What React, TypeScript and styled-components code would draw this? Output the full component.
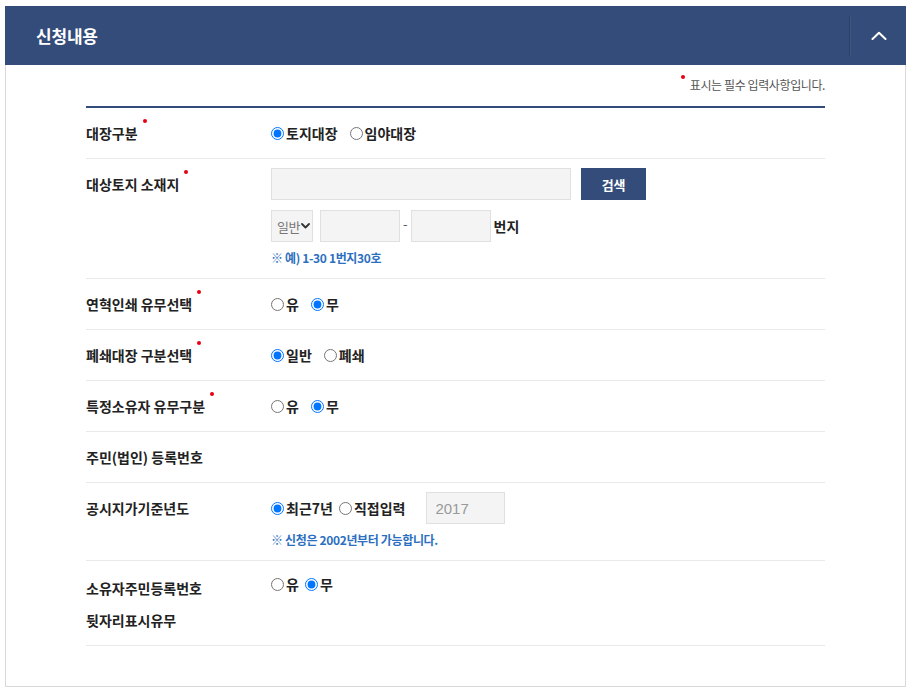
import React from "react";
import styled, { createGlobalStyle } from "styled-components";

const GlobalStyle = createGlobalStyle`
  html, body { margin: 0; padding: 0; background: #ffffff; }
  body { font-family: "Noto Sans CJK KR", "Noto Sans", sans-serif; color: #222; }
  * { box-sizing: border-box; }
`;

const NAVY = "#344c79";

const Page = styled.div`
  padding: 6px 7px 0 5px;
  width: 913px;
`;

const Panel = styled.section`
  width: 901px;
`;

const Header = styled.header`
  height: 59px;
  background: ${NAVY};
  display: flex;
  align-items: center;
  justify-content: space-between;
`;

const Title = styled.h2`
  margin: 0 0 0 31px;
  font-size: 17px;
  font-weight: 700;
  letter-spacing: -0.2px;
  color: #ffffff;
  line-height: 24px;
`;

const Toggle = styled.button`
  width: 57px;
  height: 40px;
  border: 0;
  border-left: 1px solid #2c416a;
  box-shadow: inset 1px 0 0 #3d5683;
  background: transparent;
  display: flex;
  align-items: center;
  justify-content: center;
  padding: 0 0 0 2px;
  cursor: pointer;
`;

const Body = styled.div`
  border: 1px solid #d9d9d9;
  border-top: 0;
  padding: 0 80px 40px 80px;
`;

const Note = styled.p`
  margin: 0;
  height: 43px;
  display: flex;
  align-items: center;
  justify-content: flex-end;
  font-size: 12px;
  letter-spacing: -0.4px;
  color: #555;
  border-bottom: 2px solid ${NAVY};
  padding-bottom: 3px;
`;

const NoteText = styled.span`
  position: relative;
  &::before {
    content: "";
    position: absolute;
    left: -9px;
    top: -1px;
    width: 4px;
    height: 4px;
    border-radius: 50%;
    background: #e60012;
  }
`;

const Row = styled.div<{ $tall?: boolean }>`
  display: grid;
  grid-template-columns: 185px 1fr;
  border-bottom: 1px solid #e9e9e9;
  padding: ${(p) => (p.$tall ? "11px 0 9px" : "9px 0")};
`;

const Label = styled.div`
  font-size: 14px;
  font-weight: 700;
  letter-spacing: 0;
  line-height: 32px;
  color: #222;
`;

const LabelText = styled.span<{ $required?: boolean }>`
  position: relative;
  &::after {
    content: "";
    display: ${(p) => (p.$required ? "block" : "none")};
    position: absolute;
    right: -9px;
    top: -4px;
    width: 4px;
    height: 4px;
    border-radius: 50%;
    background: #e60012;
  }
`;

const Value = styled.div`
  display: flex;
  flex-direction: column;
  gap: 10px;
`;

const Line = styled.div<{ $gap?: number; $lift?: number }>`
  display: flex;
  align-items: center;
  min-height: 32px;
  gap: ${(p) => p.$gap ?? 12}px;
  margin-top: ${(p) => -(p.$lift ?? 0)}px;
`;

const Radio = styled.label`
  display: inline-flex;
  align-items: center;
  font-size: 14px;
  font-weight: 700;
  letter-spacing: 0;
  color: #222;
  line-height: 20px;
  input {
    width: 13px;
    height: 13px;
    margin: 0 2px 0 0;
  }
`;

const TextInput = styled.input<{ $w: number; $offset?: number }>`
  width: ${(p) => p.$w}px;
  height: 32px;
  margin-left: ${(p) => p.$offset ?? 0}px;
  border: 1px solid #e0e0e0;
  background: #f4f4f4;
  padding: 0 8px;
  font-family: "Liberation Sans", Arial, sans-serif;
  font-size: 15px;
  color: #999;
  outline: none;
`;

const SearchButton = styled.button`
  width: 65px;
  height: 32px;
  margin-left: -2px;
  border: 0;
  background: ${NAVY};
  color: #fff;
  font-family: "Noto Sans CJK KR", sans-serif;
  font-size: 13px;
  font-weight: 700;
  letter-spacing: -0.3px;
  cursor: pointer;
`;

const SelectWrap = styled.div`
  position: relative;
  width: 42px;
  height: 32px;
  svg {
    position: absolute;
    right: 3px;
    top: 13px;
    pointer-events: none;
  }
`;

const Select = styled.select`
  appearance: none;
  width: 42px;
  height: 32px;
  border: 1px solid #e0e0e0;
  background: #f4f4f4;
  padding: 0 0 0 5px;
  font-family: "Noto Sans CJK KR", sans-serif;
  font-size: 13px;
  color: #777;
  letter-spacing: -0.5px;
  outline: none;
`;

const Dash = styled.span`
  font-size: 13px;
  color: #555;
  margin: -6px -4px 0;
`;

const Unit = styled.span`
  font-size: 14px;
  font-weight: 700;
  letter-spacing: 0;
  color: #222;
  margin-left: -4px;
`;

const Hint = styled.p`
  margin: -6px 0 0;
  font-size: 12px;
  font-weight: 700;
  letter-spacing: -0.35px;
  line-height: 23px;
  color: #2c6fbf;
`;

const Chevron = () => (
  <svg width="16" height="9" viewBox="0 0 16 9" fill="none">
    <path d="M1.5 8 L8 1.8 L14.5 8" stroke="#ffffff" strokeWidth="2" strokeLinecap="round" strokeLinejoin="round" />
  </svg>
);

const SmallChevron = () => (
  <svg width="9" height="6" viewBox="0 0 9 6" fill="none">
    <path d="M1 1 L4.5 4.5 L8 1" stroke="#333" strokeWidth="1.8" strokeLinecap="round" strokeLinejoin="round" />
  </svg>
);

type Opt = { label: string; checked?: boolean };

const RadioGroup = ({
  name,
  options,
  gap,
  lift,
}: {
  name: string;
  options: Opt[];
  gap?: number;
  lift?: number;
}) => (
  <Line $gap={gap} $lift={lift}>
    {options.map((o) => (
      <Radio key={o.label}>
        <input type="radio" name={name} defaultChecked={o.checked} />
        {o.label}
      </Radio>
    ))}
  </Line>
);

export default function App() {
  return (
    <>
      <GlobalStyle />
      <Page>
        <Panel>
          <Header>
            <Title>신청내용</Title>
            <Toggle aria-label="접기">
              <Chevron />
            </Toggle>
          </Header>
          <Body>
            <Note>
              <NoteText>표시는 필수 입력사항입니다.</NoteText>
            </Note>

            <Row>
              <Label><LabelText $required>대장구분</LabelText></Label>
              <Value>
                <RadioGroup name="ledger" options={[{ label: "토지대장", checked: true }, { label: "임야대장" }]} />
              </Value>
            </Row>

            <Row>
              <Label><LabelText $required>대상토지 소재지</LabelText></Label>
              <Value>
                <Line>
                  <TextInput $w={300} />
                  <SearchButton>검색</SearchButton>
                </Line>
                <Line $gap={7}>
                  <SelectWrap>
                    <Select defaultValue="일반">
                      <option>일반</option>
                      <option>산</option>
                    </Select>
                    <SmallChevron />
                  </SelectWrap>
                  <TextInput $w={80} />
                  <Dash>-</Dash>
                  <TextInput $w={80} />
                  <Unit>번지</Unit>
                </Line>
                <Hint>※ 예) 1-30 1번지30호</Hint>
              </Value>
            </Row>

            <Row>
              <Label><LabelText $required>연혁인쇄 유무선택</LabelText></Label>
              <Value>
                <RadioGroup name="history" options={[{ label: "유" }, { label: "무", checked: true }]} />
              </Value>
            </Row>

            <Row>
              <Label><LabelText $required>폐쇄대장 구분선택</LabelText></Label>
              <Value>
                <RadioGroup name="closed" options={[{ label: "일반", checked: true }, { label: "폐쇄" }]} />
              </Value>
            </Row>

            <Row>
              <Label><LabelText $required>특정소유자 유무구분</LabelText></Label>
              <Value>
                <RadioGroup name="owner" options={[{ label: "유" }, { label: "무", checked: true }]} />
              </Value>
            </Row>

            <Row>
              <Label><LabelText>주민(법인) 등록번호</LabelText></Label>
              <Value />
            </Row>

            <Row>
              <Label><LabelText>공시지가기준년도</LabelText></Label>
              <Value>
                <Line $gap={6}>
                  <Radio>
                    <input type="radio" name="year" defaultChecked />
                    최근7년
                  </Radio>
                  <Radio>
                    <input type="radio" name="year" />
                    직접입력
                  </Radio>
                  <TextInput $w={79} $offset={15} defaultValue="2017" disabled />
                </Line>
                <Hint>※ 신청은 2002년부터 가능합니다.</Hint>
              </Value>
            </Row>

            <Row $tall>
              <Label>
                <LabelText>소유자주민등록번호</LabelText>
                <br />
                <LabelText>뒷자리표시유무</LabelText>
              </Label>
              <Value>
                <RadioGroup name="rrn" gap={6} lift={4} options={[{ label: "유" }, { label: "무", checked: true }]} />
              </Value>
            </Row>
          </Body>
        </Panel>
      </Page>
    </>
  );
}
